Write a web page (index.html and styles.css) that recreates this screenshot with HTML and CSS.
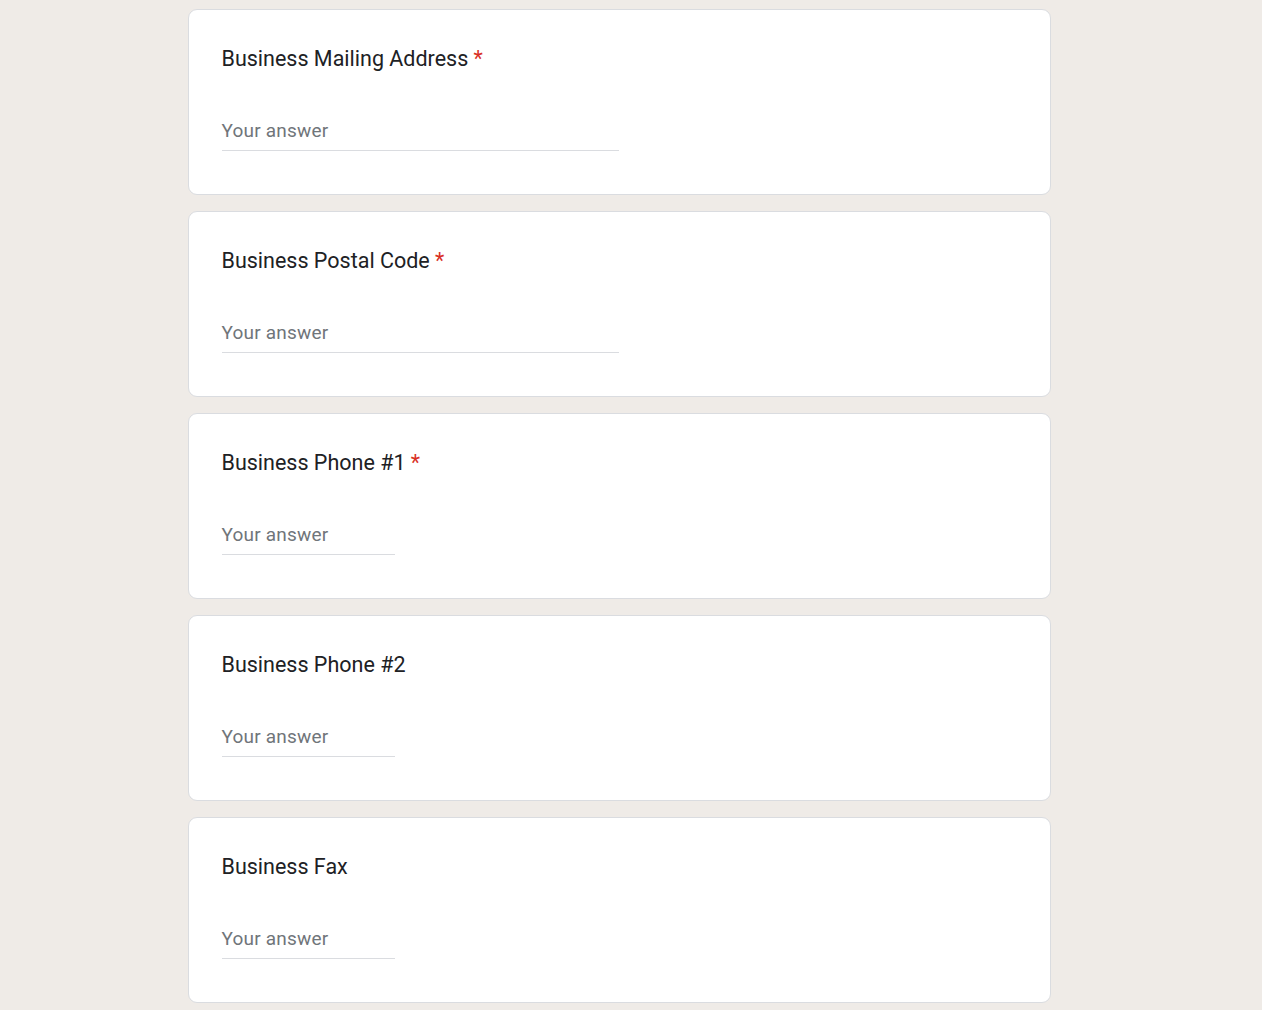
FILE: index.html
```html
<!DOCTYPE html>
<html>
<head>
<meta charset="utf-8">
<link rel="stylesheet" href="styles.css">
</head>
<body>
<div class="wrap">
  <div class="card">
    <div class="title">Business Mailing Address<span class="req"> *</span></div>
    <div class="input long">Your answer</div>
  </div>
  <div class="card">
    <div class="title">Business Postal Code<span class="req"> *</span></div>
    <div class="input long">Your answer</div>
  </div>
  <div class="card">
    <div class="title">Business Phone #1<span class="req"> *</span></div>
    <div class="input short">Your answer</div>
  </div>
  <div class="card">
    <div class="title">Business Phone #2</div>
    <div class="input short">Your answer</div>
  </div>
  <div class="card">
    <div class="title">Business Fax</div>
    <div class="input short">Your answer</div>
  </div>
</div>
</body>
</html>
```
FILE: styles.css
```css
html, body {
  margin: 0;
  padding: 0;
  background: #efebe7;
  overflow: hidden;
  height: 1010px;
}
.wrap {
  padding: 9px 24px 0 0;
  display: flex;
  flex-direction: column;
  align-items: center;
  gap: 16px;
}
.card {
  box-sizing: border-box;
  width: 863px;
  height: 186px;
  background: #fff;
  border: 1px solid #dadce0;
  border-radius: 9px;
  padding: 34px 33px 0 33px;
}
.title {
  font-family: Roboto, "Liberation Sans", sans-serif;
  font-size: 21.5px;
  line-height: 30px;
  color: #202124;
}
.req {
  color: #d93025;
}
.input {
  margin-top: 45px;
  font-family: Roboto, "Liberation Sans", sans-serif;
  font-size: 19px;
  line-height: 24px;
  color: #70757a;
  padding-bottom: 7px;
  border-bottom: 1px solid #dadce0;
  letter-spacing: 0.2px;
}
.long { width: 397px; }
.short { width: 173px; }
```
